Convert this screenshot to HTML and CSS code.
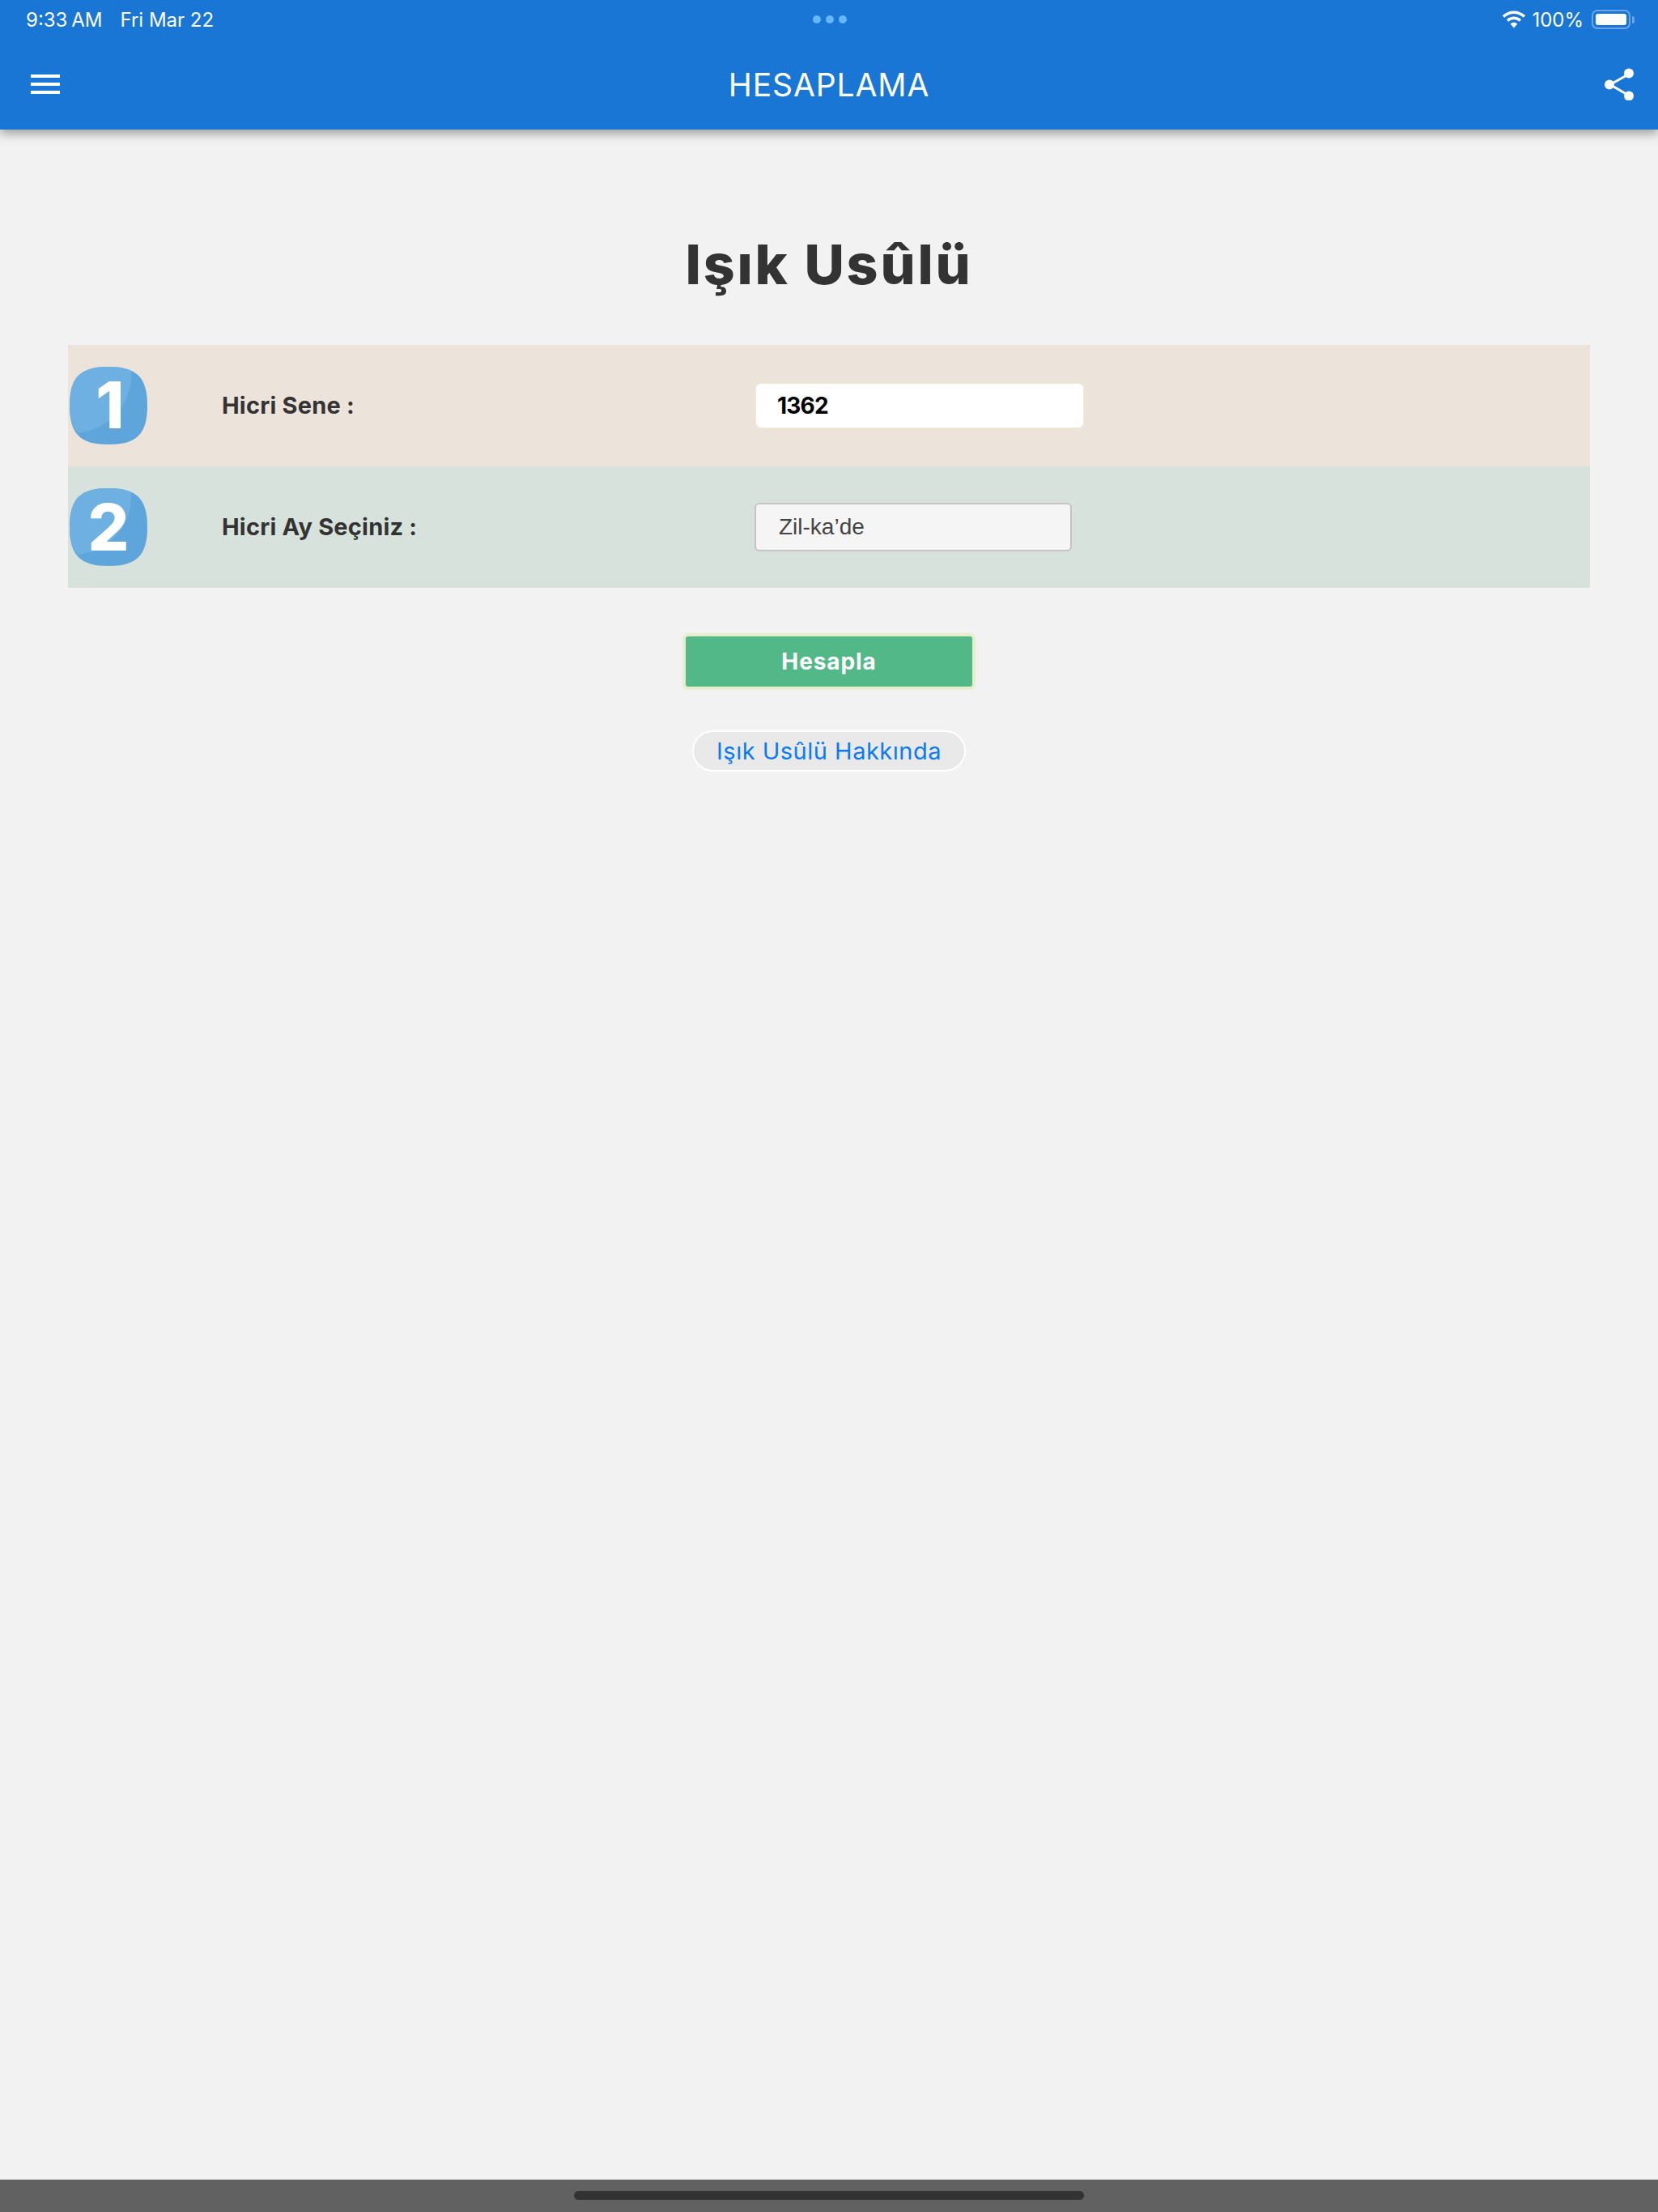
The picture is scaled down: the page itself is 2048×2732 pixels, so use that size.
FILE: index.html
```html
<!DOCTYPE html>
<html lang="tr">
<head>
  <meta charset="UTF-8"/>
  <meta name="viewport" content="width=device-width, initial-scale=1.0"/>
  <title>Hesaplama</title>
  <link rel="stylesheet" href="styles.css">
</head>
<body>
<header class="app-header">
  <div class="status-bar">
    <div class="status-left">
      <span class="status-time">9:33 AM</span>
      <span>Fri Mar 22</span>
    </div>
    <div class="status-dots"><i></i><i></i><i></i></div>
    <div class="status-right">
      <svg class="wifi" width="28" height="22" viewBox="0 0 28 22">
        <path d="M1 7.500C8.500 .5 19.500 .5 27 7.500" fill="none" stroke="#fff" stroke-width="3.4"/>
        <path d="M6 12.500C10.800 8.200 17.200 8.200 22 12.500" fill="none" stroke="#fff" stroke-width="3.4"/>
        <path d="M9.600 16.600C12.200 14 15.800 14 18.400 16.600L14 21.400Z" fill="#fff"/>
      </svg>
      <span>100%</span>
      <div class="battery"><div class="battery-fill"></div></div>
      <div class="battery-tip"></div>
    </div>
  </div>
  <div class="toolbar">
    <button class="menu-btn" aria-label="Menu"><i></i><i></i><i></i></button>
    <div class="toolbar-title">HESAPLAMA</div>
    <svg class="share" width="38" height="40" viewBox="0 0 38 40">
      <path d="M30 7.500 7 20.500 30 34" fill="none" stroke="#fff" stroke-width="3"/>
      <circle cx="30" cy="6.500" r="6" fill="#fff"/>
      <circle cx="6" cy="20.500" r="6" fill="#fff"/>
      <circle cx="30" cy="34.500" r="6" fill="#fff"/>
    </svg>
  </div>
</header>

<main class="content">
  <h1>Işık Usûlü</h1>

  <div class="form-rows">
    <div class="form-row row-one">
      <svg class="step" width="96" height="96" viewBox="0 0 96 96">
        <path class="step-bg" d="M48 0C82 0 96 12 96 48S82 96 48 96 0 84 0 48 14 0 48 0Z"/>
        <path class="step-light" d="M48 0C60 0 69 2 76 5 78 40 56 76 10 82 3 74 0 63 0 48 0 12 14 0 48 0Z"/>
        <text x="50" y="76" class="step-num">1</text>
      </svg>
      <label class="row-label">Hicri Sene :</label>
      <input class="year-input" type="text" value="1362"/>
    </div>
    <div class="form-row row-two">
      <svg class="step" width="96" height="96" viewBox="0 0 96 96">
        <path class="step-bg" d="M48 0C82 0 96 12 96 48S82 96 48 96 0 84 0 48 14 0 48 0Z"/>
        <path class="step-light" d="M48 0C60 0 69 2 76 5 78 40 56 76 10 82 3 74 0 63 0 48 0 12 14 0 48 0Z"/>
        <text x="48" y="77" class="step-num">2</text>
      </svg>
      <label class="row-label">Hicri Ay Seçiniz :</label>
      <div class="month-select">Zil-ka’de</div>
    </div>
  </div>

  <button class="calc-btn">Hesapla</button>
  <a class="about-link">Işık Usûlü Hakkında</a>
</main>

<footer class="home-bar"><div class="home-pill"></div></footer>
</body>
</html>
```

FILE: styles.css
```css
* {
  box-sizing: border-box;
}

html, body {
  height: 100%;
}

body {
  margin: 0;
  font-family: Inter, "Liberation Sans", sans-serif;
  background: #f2f2f2;
  color: #333;
  display: flex;
  flex-direction: column;
  overflow: hidden;
}

.app-header {
  height: 160px;
  background: #1976d5;
  color: #fff;
  box-shadow: 0 5px 12px rgba(0, 0, 0, 0.35);
}

.status-bar {
  height: 48px;
  display: grid;
  grid-template-columns: 1fr auto 1fr;
  align-items: center;
  padding: 0 30px 0 32px;
  font-size: 24px;
}

.status-left {
  display: flex;
  gap: 22px;
}

.status-time {
  word-spacing: -2px;
}

.status-dots {
  display: flex;
  gap: 6px;
}

.status-dots i {
  width: 10px;
  height: 10px;
  border-radius: 50%;
  background: #62b8fb;
}

.status-right {
  display: flex;
  align-items: center;
  justify-content: flex-end;
  gap: 8px;
}

.battery {
  width: 48px;
  height: 24px;
  margin-left: 2px;
  padding: 3px;
  border: 2px solid #6aa6e6;
  border-radius: 7px;
}

.battery-fill {
  height: 100%;
  background: #fff;
  border-radius: 3px;
}

.battery-tip {
  width: 3px;
  height: 9px;
  margin-left: -6px;
  margin-right: -1px;
  background: #6aa6e6;
  border-radius: 0 3px 3px 0;
}

.toolbar {
  height: 112px;
  padding: 0 28px;
  display: grid;
  grid-template-columns: 1fr auto 1fr;
  align-items: center;
}

.menu-btn {
  width: 36px;
  margin-left: 10px;
  padding: 0;
  border: none;
  background: none;
  display: flex;
  flex-direction: column;
  gap: 6px;
}

.menu-btn i {
  height: 4px;
  background: #fff;
}

.toolbar-title {
  font-size: 39px;
  letter-spacing: 0.9px;
}

.share {
  justify-self: end;
}

.content {
  flex: 1;
  display: flex;
  flex-direction: column;
  align-items: center;
  padding: 0 84px;
}

h1 {
  margin: 125px 0 0;
  height: 141px;
  font-size: 68px;
  line-height: 82px;
  font-weight: 800;
  letter-spacing: 2.8px;
}

.form-rows {
  width: 100%;
}

.form-row {
  display: flex;
  align-items: center;
  height: 150px;
  padding-left: 2px;
}

.row-one {
  background: #ece4db;
}

.row-two {
  background: #d8e2dc;
}

.step {
  flex: none;
  overflow: visible;
}

.step-bg {
  fill: #5da5da;
}

.step-light {
  fill: #6eb0e2;
}

.step-num {
  fill: #fff;
  font-size: 80px;
  font-weight: 800;
  text-anchor: middle;
}

.row-label {
  width: 659px;
  margin-left: 92px;
  padding-bottom: 2px;
  font-size: 29px;
  font-weight: 700;
  letter-spacing: 0.2px;
}

.year-input {
  width: 406px;
  height: 56px;
  padding: 0 26px;
  border: 1px solid #eaedcd;
  border-radius: 7px;
  background: #fff;
  color: #000;
  font-family: inherit;
  font-size: 28px;
  font-weight: 700;
  letter-spacing: -0.8px;
}

.month-select {
  width: 392px;
  height: 60px;
  margin-left: -1px;
  padding-left: 28px;
  display: flex;
  align-items: center;
  border: 2px solid #c4c4c4;
  border-radius: 6px;
  background: #f5f5f5;
  color: #444;
  font-family: "Liberation Sans", sans-serif;
  font-size: 28px;
}

.calc-btn {
  width: 362px;
  height: 70px;
  margin-top: 56px;
  border: 4px solid #e8edcb;
  border-radius: 7px;
  background: #53b888;
  color: #fff;
  font-family: inherit;
  font-size: 28px;
  font-weight: 700;
  letter-spacing: 0.9px;
}

.about-link {
  width: 338px;
  height: 51px;
  margin-top: 50px;
  display: flex;
  align-items: center;
  justify-content: center;
  border: 2px solid #fff;
  border-radius: 26px;
  background: #e9e9e9;
  color: #0a7bf5;
  font-size: 29px;
  letter-spacing: 0.5px;
}

.home-bar {
  height: 40px;
  background: #616161;
  display: flex;
  justify-content: center;
  padding-top: 14px;
}

.home-pill {
  width: 630px;
  height: 11px;
  border-radius: 6px;
  background: #333;
}
```
